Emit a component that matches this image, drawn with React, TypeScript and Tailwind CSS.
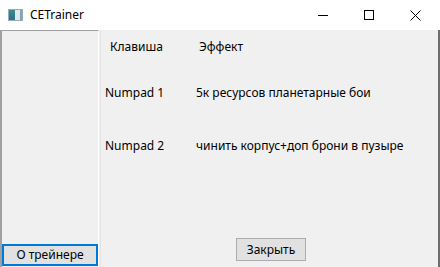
import React from "react";

export default function App() {
  const font = { fontFamily: '"Segoe UI", "Noto Sans", "Open Sans", sans-serif' };
  return (
    <div className="w-[440px] h-[267px] flex flex-col bg-white overflow-hidden text-[12px] text-black" style={font}>
      {/* Title bar */}
      <div className="h-[30px] flex items-center bg-white shrink-0">
        <div className="ml-[8px] w-[15px] h-[12px] flex items-stretch border border-[#9ab] bg-[#eef]">
          <div className="w-[6px] bg-gradient-to-b from-[#3a8a8a] to-[#2d6f8f]" />
          <div className="flex-1 bg-[#dfe8ee]" />
          <div className="w-[2px] bg-[#7aa]" />
        </div>
        <span className="ml-[7px] text-[12px] leading-none text-black">CETrainer</span>
        <div className="ml-auto flex items-center h-full">
          <div className="w-[46px] h-full flex items-center justify-center">
            <div className="w-[10px] h-[1px] bg-black" />
          </div>
          <div className="w-[46px] h-full flex items-center justify-center">
            <div className="w-[10px] h-[10px] border border-black" />
          </div>
          <div className="w-[46px] h-full flex items-center justify-center mr-[2px]">
            <svg width="11" height="11" viewBox="0 0 11 11">
              <path d="M0.5 0.5 L10.5 10.5 M10.5 0.5 L0.5 10.5" stroke="black" strokeWidth="1" />
            </svg>
          </div>
        </div>
      </div>
      {/* Body */}
      <div className="flex-1 flex bg-[#f0f0f0]">
        {/* Left panel */}
        <div className="w-[99px] flex flex-col border-t border-t-[#a0a0a0] border-l-2 border-l-[#a0a0a0] border-r border-r-white">
          <div className="flex-1" />
          <div className="mb-[1px] h-[22px] border-2 border-[#0078d7] bg-[#e1e1e1] flex items-center justify-center leading-none">
            О трейнере
          </div>
        </div>
        <div className="w-[1px] bg-[#f0f0f0]" />
        <div className="w-[1px] bg-[#e3e3e3]" />
        {/* Right content */}
        <div className="flex-1 flex flex-col relative">
          <div className="flex mt-[10px] h-[14px] items-center">
            <span className="ml-[9px] w-[89px]">Клавиша</span>
            <span>Эффект</span>
          </div>
          <div className="flex mt-[32px] h-[14px] items-center">
            <span className="ml-[4px] w-[91px]">Numpad 1</span>
            <span>5к ресурсов планетарные бои</span>
          </div>
          <div className="flex mt-[39px] h-[14px] items-center">
            <span className="ml-[4px] w-[91px]">Numpad 2</span>
            <span>чинить корпус+доп брони в пузыре</span>
          </div>
          <div className="flex-1" />
          <div className="flex mb-[6px]">
            <div className="ml-[135px] w-[70px] h-[23px] border border-[#adadad] bg-[#e1e1e1] flex items-center justify-center leading-none">
              Закрыть
            </div>
          </div>
        </div>
        <div className="w-[2px] bg-[#6e6e6e]" />
      </div>
    </div>
  );
}
